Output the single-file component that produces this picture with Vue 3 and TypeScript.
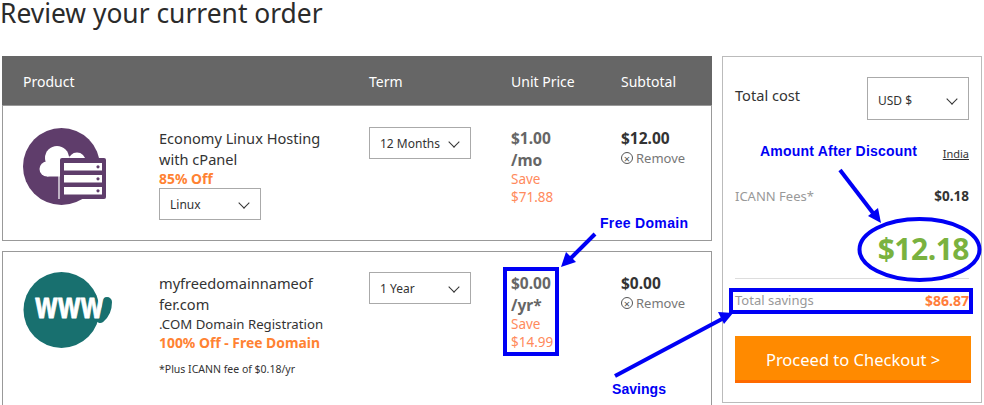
<template>
  <div class="page">
    <h1 class="title">Review your current order</h1>
    <div class="content">
      <section class="cart">
        <div class="cart-head">
          <span>Product</span>
          <span></span>
          <span>Term</span>
          <span>Unit Price</span>
          <span>Subtotal</span>
        </div>

        <div class="row row--first">
          <svg class="pic" width="90" height="80" viewBox="0 0 90 80">
            <circle cx="38.5" cy="39.5" r="38.5" fill="#5f3d6b" />
            <g fill="#fff">
              <circle cx="24" cy="42" r="7.5" />
              <circle cx="34" cy="31" r="12" />
              <circle cx="54" cy="34" r="8.5" />
              <rect x="24" y="36" width="36" height="13.5" />
            </g>
            <rect x="37" y="31" width="46" height="41" rx="2" fill="#5f3d6b" />
            <path d="M36 72V32q0-2 2-2h22" fill="none" stroke="#fff" stroke-width="1.2" />
            <g fill="#fff">
              <rect x="41" y="36" width="38" height="7.5" />
              <rect x="41" y="48" width="38" height="7.5" />
              <rect x="41" y="60" width="38" height="7.5" />
            </g>
            <g fill="#5f3d6b">
              <circle cx="75" cy="39.8" r="1.6" />
              <circle cx="75" cy="51.8" r="1.6" />
              <circle cx="75" cy="63.8" r="1.6" />
            </g>
          </svg>
          <div class="info">
            <div class="name">Economy Linux Hosting<br />with cPanel</div>
            <div class="off">85% Off</div>
            <div class="select select--os"><span>Linux</span><i class="chev"></i></div>
          </div>
          <div class="select select--term"><span>12 Months</span><i class="chev"></i></div>
          <div class="price">
            <div class="amount">$1.00<br />/mo</div>
            <div class="save">Save<br />$71.88</div>
          </div>
          <div class="sub">
            <div class="sub-amount">$12.00</div>
            <div class="remove"><i class="x">×</i>Remove</div>
          </div>
        </div>

        <div class="row row--second">
          <svg class="pic" width="90" height="80" viewBox="0 0 90 80">
            <circle cx="38.5" cy="38" r="38" fill="#18706f" />
            <path d="M84 30c0 6-2 12-7 16" fill="none" stroke="#18706f" stroke-width="10" stroke-linecap="round" />
            <text class="www" transform="translate(12 46) scale(0.74 1)">www</text>
          </svg>
          <div class="info">
            <div class="name">myfreedomainnameof<br />fer.com</div>
            <div class="kind">.COM Domain Registration</div>
            <div class="off">100% Off - Free Domain</div>
            <div class="note">*Plus ICANN fee of $0.18/yr</div>
          </div>
          <div class="select select--term"><span>1 Year</span><i class="chev"></i></div>
          <div class="price">
            <div class="amount">$0.00<br />/yr*</div>
            <div class="save">Save<br />$14.99</div>
          </div>
          <div class="sub">
            <div class="sub-amount">$0.00</div>
            <div class="remove"><i class="x">×</i>Remove</div>
          </div>
        </div>
      </section>

      <aside class="summary">
        <div class="summary-top">
          <span class="total-label">Total cost</span>
          <div class="select select--cur"><span>USD $</span><i class="chev"></i></div>
        </div>
        <div class="region"><a href="#" @click.prevent>India</a></div>
        <div class="line line--fees">
          <span>ICANN Fees*</span>
          <b>$0.18</b>
        </div>
        <div class="grand">$12.18</div>
        <div class="line line--savings">
          <span>Total savings</span>
          <b>$86.87</b>
        </div>
        <button class="checkout">Proceed to Checkout &gt;</button>
      </aside>
    </div>

    <!-- hand drawn markup on top of the screenshot -->
    <svg class="marks" width="984" height="405" viewBox="0 0 984 405">
      <g fill="none" stroke="#0000f5" stroke-width="4">
        <rect x="505" y="269" width="52" height="85" />
        <rect x="731" y="290" width="240" height="22" />
        <ellipse cx="919.5" cy="249.5" rx="60" ry="30.5" />
        <path d="M595 234 571 258" />
        <path d="M615 376 722 319" />
        <path d="M840 170 873 213" />
      </g>
      <g fill="#0000f5">
        <path d="M561 267l5-15 10 10z" />
        <path d="M733 313l-15-1 6 12z" />
        <path d="M881 223l-13-7 10-8z" />
      </g>
      <g class="mark-text" fill="#0000f5">
        <text x="600" y="228" textLength="88">Free Domain</text>
        <text x="612" y="394" textLength="54">Savings</text>
        <text x="760" y="156" textLength="157">Amount After Discount</text>
      </g>
    </svg>
  </div>
</template>

<script setup lang="ts">
</script>

<style>
html, body {
  margin: 0;
  background: #fff;
}
</style>

<style scoped>
.page {
  position: relative;
  width: 984px;
  height: 405px;
  overflow: hidden;
  font-family: "Noto Sans", "Open Sans", sans-serif;
  color: #333;
}
.title {
  margin: 0;
  height: 56px;
  font-size: 26.4px;
  font-weight: 400;
  line-height: 26px;
  color: #2b2b2b;
}
.content {
  display: flex;
  align-items: flex-start;
  gap: 10px;
  padding-left: 2px;
}
.cart {
  width: 710px;
  flex: none;
}
.cart-head,
.row {
  display: grid;
  grid-template-columns: 136px 210px 142px 110px 1fr;
  padding-left: 21px;
}
.cart-head {
  height: 50px;
  padding-top: 2px;
  align-items: center;
  background: #666;
  color: #fff;
  font-size: 14px;
  border-bottom: 1px solid #999;
  box-sizing: border-box;
}
.row {
  border: 1px solid #999;
  box-sizing: border-box;
  padding-left: 20px;
}
.row--first {
  height: 135px;
  border-top: none;
  padding-top: 21px;
}
.row--second {
  height: 170px;
  margin-top: 10px;
  padding-top: 20px;
}
.info {
  font-size: 14px;
  color: #333;
  padding-top: 1px;
}
.name {
  font-size: 14.6px;
  line-height: 21px;
}
.kind {
  font-size: 13.2px;
  line-height: 19px;
}
.off {
  font-size: 13.9px;
  line-height: 18px;
  font-weight: 700;
  color: #ff8232;
}
.note {
  margin-top: 9px;
  font-size: 10.5px;
  line-height: 16px;
}
.select {
  display: flex;
  align-items: center;
  justify-content: space-between;
  box-sizing: border-box;
  border: 1px solid #aaa;
  height: 32px;
  padding: 0 10px;
  font-size: 12px;
  color: #333;
}
.select--os {
  width: 102px;
}
.select--term {
  width: 102px;
}
.select--cur {
  width: 102px;
  height: 43px;
  padding-top: 3px;
}
.chev {
  width: 7px;
  height: 7px;
  margin: -3px 2px 0 0;
  border-right: 1.4px solid #333;
  border-bottom: 1.4px solid #333;
  transform: rotate(45deg);
}
.amount {
  font-size: 15.5px;
  line-height: 22px;
  font-weight: 700;
  color: #666;
}
.save {
  margin-top: -1px;
  font-size: 13.5px;
  line-height: 18px;
  color: #ff8a5c;
}
.sub-amount {
  font-size: 15.5px;
  line-height: 22px;
  font-weight: 700;
  color: #333;
}
.remove {
  display: flex;
  align-items: center;
  font-size: 13px;
  line-height: 18px;
  color: #777;
}
.x {
  display: inline-flex;
  align-items: center;
  justify-content: center;
  box-sizing: border-box;
  width: 12px;
  height: 12px;
  margin-right: 3px;
  border: 1.2px solid #555;
  border-radius: 50%;
  font-style: normal;
  font-size: 11px;
  line-height: 1;
  color: #555;
}
.www {
  font-size: 36px;
  font-weight: 700;
  fill: #fff;
  stroke: #fff;
  stroke-width: 0.8;
  stroke-linejoin: round;
}
.summary {
  box-sizing: border-box;
  width: 260px;
  height: 347px;
  border: 1px solid #bbb;
  padding: 20px 12px 0 12px;
}
.summary-top {
  display: flex;
  justify-content: space-between;
  align-items: flex-start;
}
.total-label {
  margin-top: 7px;
  font-size: 14.6px;
  line-height: 22px;
}
.region {
  margin-top: 25px;
  text-align: right;
  font-size: 11px;
  line-height: 18px;
}
.region a {
  color: #333;
}
.line {
  display: flex;
  justify-content: space-between;
  align-items: center;
  font-size: 13px;
}
.line span {
  color: #999;
}
.line--fees {
  margin-top: 22px;
  height: 22px;
}
.line--fees b {
  font-size: 13.5px;
  color: #333;
}
.grand {
  margin-top: 21px;
  text-align: right;
  font-family: "Open Sans", sans-serif;
  font-size: 30px;
  letter-spacing: -0.5px;
  line-height: 42px;
  font-weight: 700;
  color: #7ab23f;
}
.line--savings {
  margin-top: 8px;
  height: 42px;
  border-top: 1px solid #ddd;
}
.line--savings b {
  font-size: 14px;
  color: #ff7d3b;
}
.checkout {
  display: block;
  box-sizing: border-box;
  width: 236px;
  height: 47px;
  margin-top: 15px;
  border: none;
  border-bottom: 3px solid #ff6a00;
  background: #ff8a00;
  color: #fff;
  font-family: inherit;
  font-size: 16.5px;
  padding: 2px 0 0;
}
.marks {
  position: absolute;
  left: 0;
  top: 0;
  pointer-events: none;
}
.mark-text {
  font-family: "Liberation Sans", Arial, sans-serif;
  font-size: 14px;
  font-weight: 700;
}
</style>
